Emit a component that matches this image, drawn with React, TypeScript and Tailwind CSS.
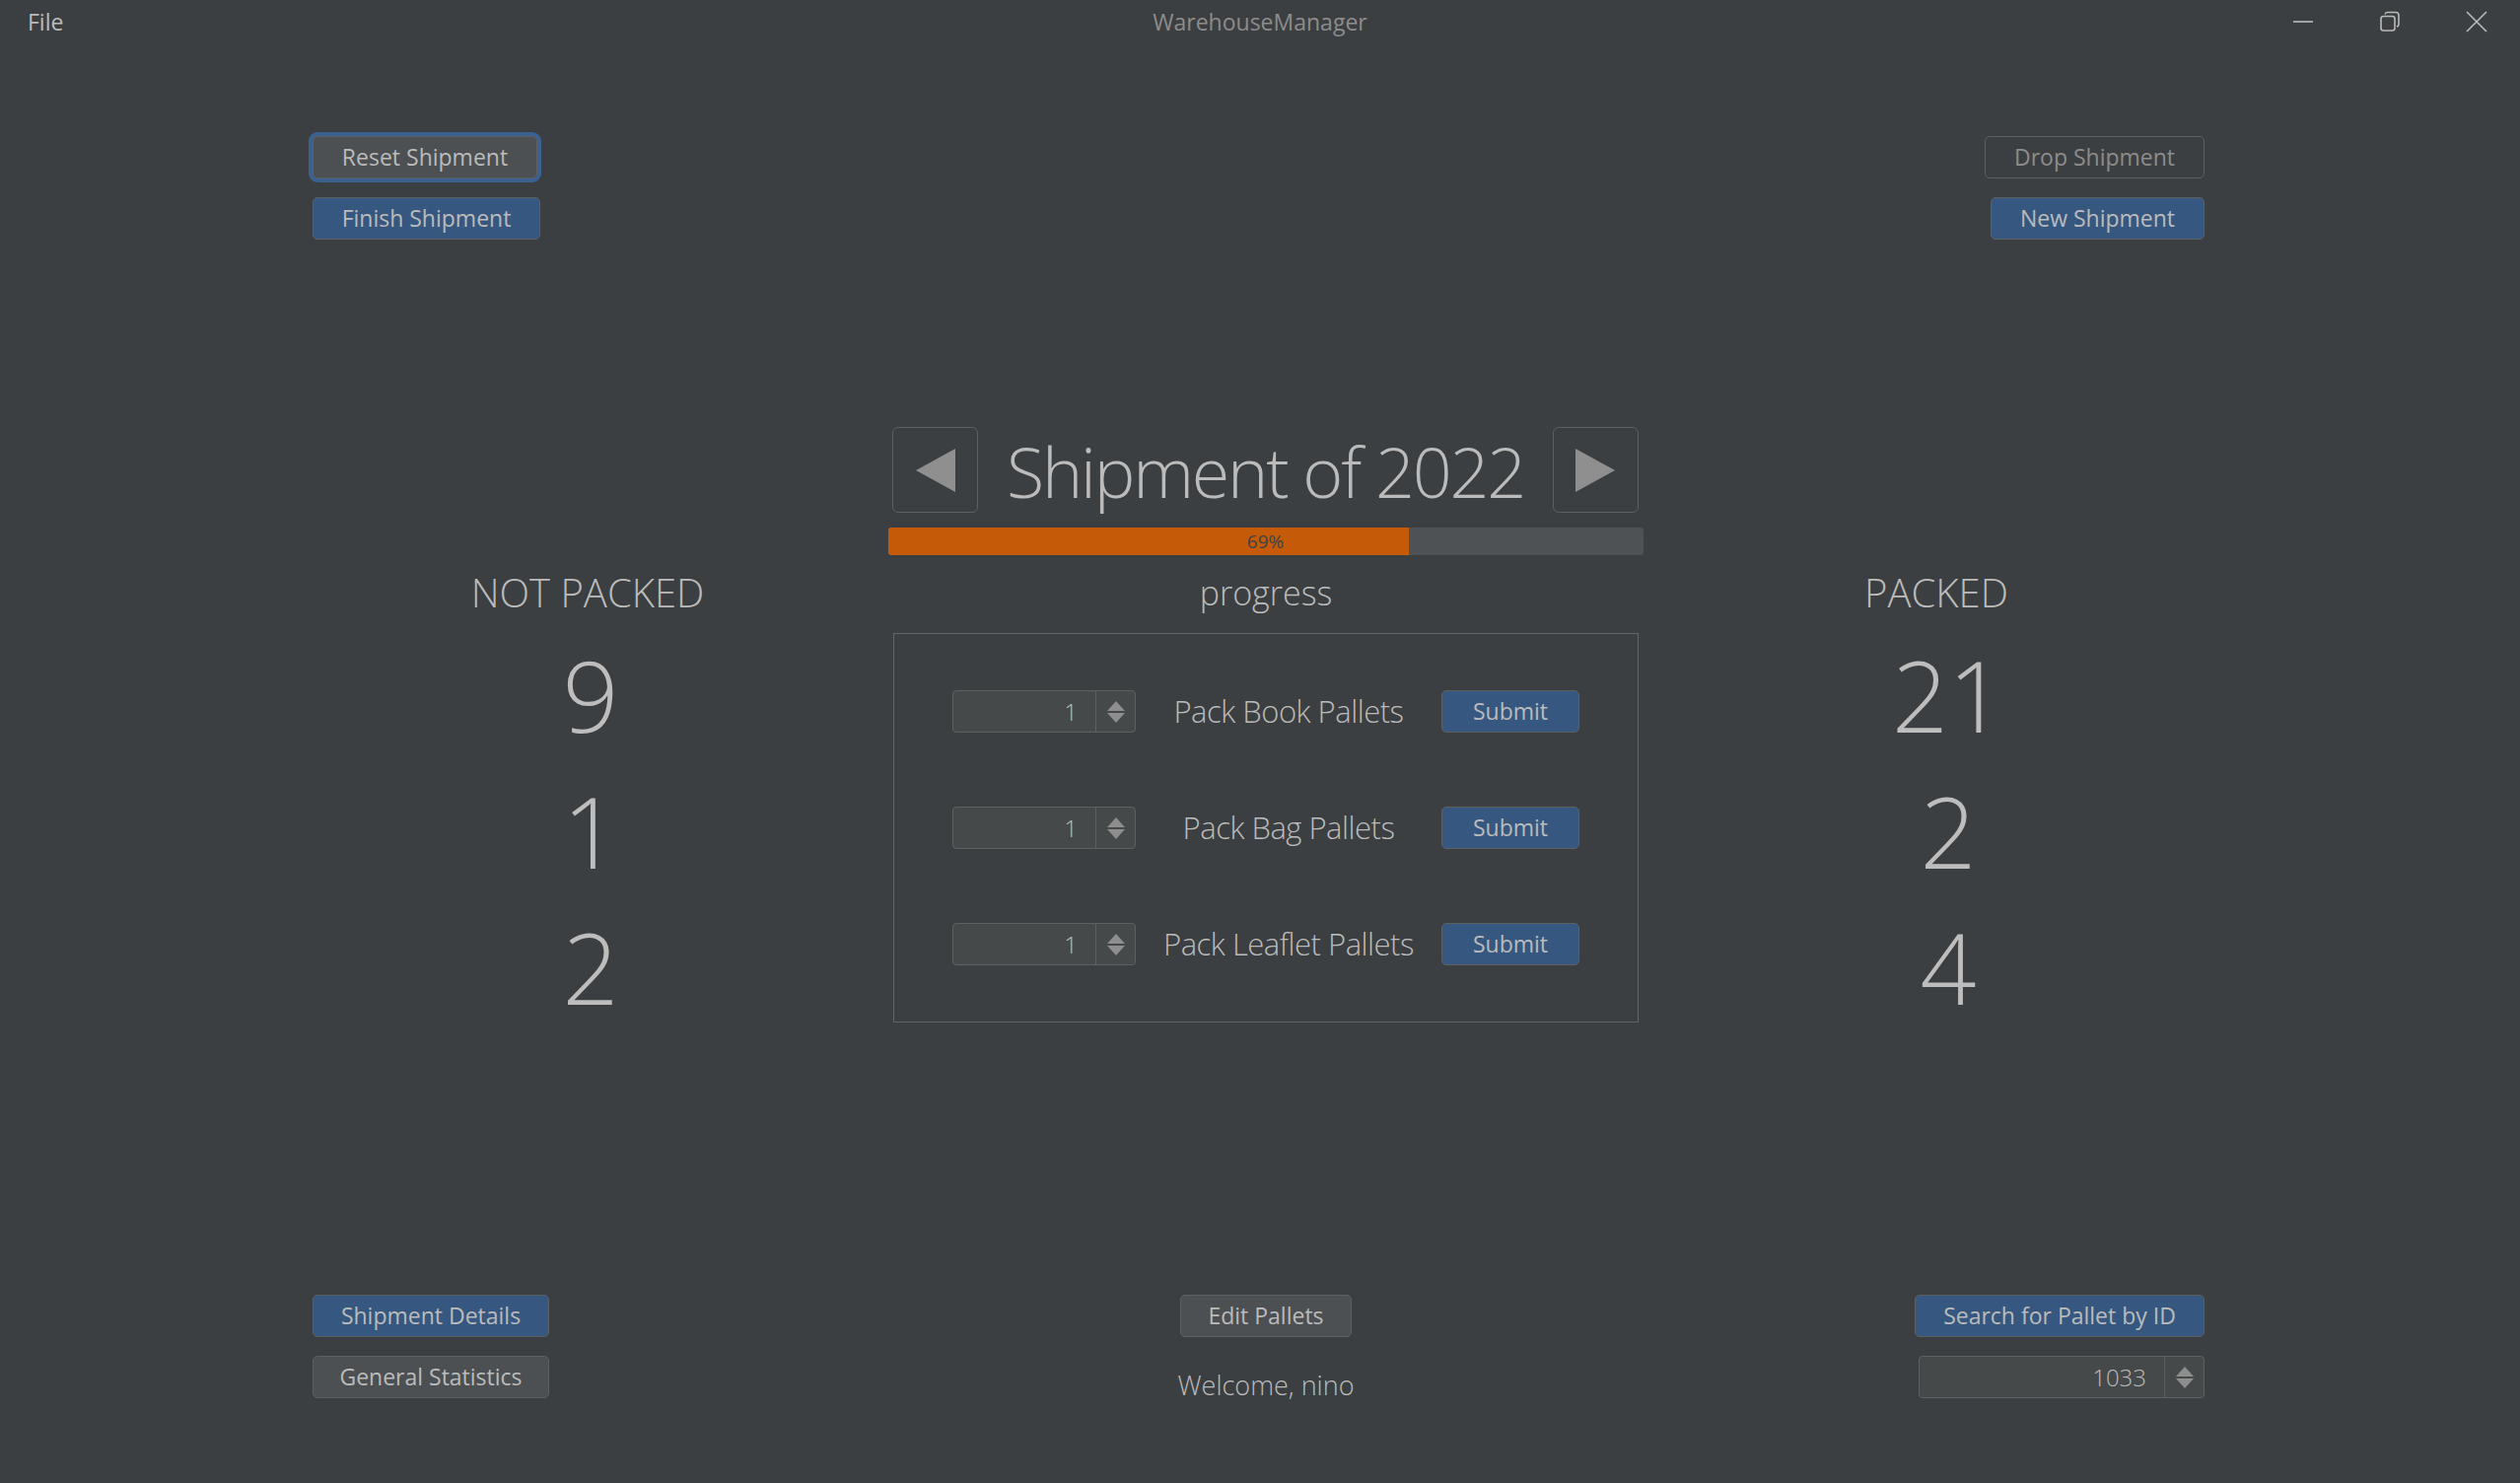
import React from "react";

const FONT = { fontFamily: '"Open Sans", "Noto Sans", "Liberation Sans", sans-serif' };

function Btn({
  children,
  variant = "gray",
  className = "",
}: {
  children: React.ReactNode;
  variant?: "gray" | "blue" | "ghost";
  className?: string;
}) {
  const v =
    variant === "blue"
      ? "bg-[#365880] text-[#bbbbbb]"
      : variant === "ghost"
      ? "bg-transparent text-[#8c8c8c]"
      : "bg-[#4c5052] text-[#bbbbbb]";
  return (
    <div
      className={`h-[43px] rounded-[5px] border border-[#5e6060] flex items-center justify-center text-[23px] leading-none ${v} ${className}`}
    >
      {children}
    </div>
  );
}

function Arrows() {
  return (
    <div className="w-[40px] h-full border-l border-[#5e6060] flex flex-col items-center justify-center gap-[2px]">
      <svg width="18" height="10" viewBox="0 0 18 10">
        <polygon points="9,0 18,10 0,10" fill="#8e8e8e" />
      </svg>
      <svg width="18" height="10" viewBox="0 0 18 10">
        <polygon points="0,0 18,0 9,10" fill="#8e8e8e" />
      </svg>
    </div>
  );
}

function Spinner({ value, className = "" }: { value: string; className?: string }) {
  return (
    <div
      className={`h-[43px] rounded-[4px] border border-[#5e6060] bg-[#45494a] flex items-stretch ${className}`}
    >
      <div className="flex-1 flex items-center justify-end pr-[18px] text-[24px] font-light text-[#bbbbbb]">
        {value}
      </div>
      <Arrows />
    </div>
  );
}

function PackRow({ label }: { label: string }) {
  return (
    <div className="flex items-center h-[43px]">
      <Spinner value="1" className="w-[186px]" />
      <div className="flex-1 text-center text-[31px] font-light text-[#bbbbbb] tracking-[-0.5px]">
        {label}
      </div>
      <Btn variant="blue" className="w-[140px]">
        Submit
      </Btn>
    </div>
  );
}

function Num({ children }: { children: React.ReactNode }) {
  return (
    <div className="h-[138px] text-[100px] leading-[138px] font-light text-[#bdbdbd] text-center">
      {children}
    </div>
  );
}

export default function App() {
  return (
    <div
      style={FONT}
      className="w-[2556px] h-[1504px] bg-[#3c3f41] flex flex-col overflow-hidden select-none"
    >
      {/* Title bar */}
      <div className="h-[44px] grid grid-cols-[1fr_auto_1fr] items-center">
        <div className="pl-[28px] text-[23px] text-[#bbbbbb] leading-none">File</div>
        <div className="text-[23px] text-[#8c8c8c] leading-none">WarehouseManager</div>
        <div className="flex justify-end h-full">
          <div className="w-[88px] h-full flex items-center justify-center">
            <svg width="22" height="22" viewBox="0 0 22 22">
              <line x1="1" y1="11" x2="21" y2="11" stroke="#bbbbbb" strokeWidth="1.6" />
            </svg>
          </div>
          <div className="w-[88px] h-full flex items-center justify-center">
            <svg width="22" height="22" viewBox="0 0 22 22">
              <rect x="2" y="5.5" width="14" height="14.5" rx="2.5" fill="none" stroke="#bbbbbb" strokeWidth="1.6" />
              <path d="M6 3.5 Q6.5 1.5 8.5 1.5 H17 Q20 1.5 20 4.5 V13.5 Q20 15.5 18 16" fill="none" stroke="#bbbbbb" strokeWidth="1.6" />
            </svg>
          </div>
          <div className="w-[88px] h-full flex items-center justify-center">
            <svg width="24" height="24" viewBox="0 0 24 24">
              <path d="M2 2 L22 22 M22 2 L2 22" stroke="#bbbbbb" strokeWidth="1.6" />
            </svg>
          </div>
        </div>
      </div>

      {/* Top buttons */}
      <div className="pl-[317px] pr-[320px] pt-[94px] flex justify-between">
        <div className="flex flex-col gap-[19px]">
          <Btn className="w-[228px] ring-[4px] ring-[#3b6190]">Reset Shipment</Btn>
          <Btn variant="blue" className="w-[231px]">
            Finish Shipment
          </Btn>
        </div>
        <div className="flex flex-col items-end gap-[19px]">
          <Btn variant="ghost" className="w-[223px]">
            Drop Shipment
          </Btn>
          <Btn variant="blue" className="w-[217px]">
            New Shipment
          </Btn>
        </div>
      </div>

      {/* Shipment navigation */}
      <div className="mt-[190px] flex flex-col items-center pl-[11px]">
        <div className="w-[757px] h-[87px] flex items-center justify-between">
          <div className="w-[87px] h-[87px] rounded-[6px] border border-[#5e6162] flex items-center justify-center">
            <svg width="40" height="44" viewBox="0 0 40 44">
              <polygon points="0,22 40,0 40,44" fill="#8f8f8f" />
            </svg>
          </div>
          <div className="text-[70px] font-light text-[#bbbbbb] tracking-[-2.2px] leading-none pt-[2px]">
            Shipment of 2022
          </div>
          <div className="w-[87px] h-[87px] rounded-[6px] border border-[#5e6162] flex items-center justify-center">
            <svg width="40" height="44" viewBox="0 0 40 44">
              <polygon points="40,22 0,0 0,44" fill="#8f8f8f" />
            </svg>
          </div>
        </div>
        <div className="mt-[15px] w-[766px] h-[28px] rounded-[3px] bg-[#4e5254] relative overflow-hidden flex">
          <div className="h-full bg-[#c55a08]" style={{ width: "69%" }} />
          <div className="absolute inset-0 flex items-center justify-center text-[19px] text-[#3f4244]">
            69%
          </div>
        </div>
      </div>

      {/* Middle section */}
      <div className="mt-[14px] pl-[317px] pr-[320px] grid grid-cols-[589px_756px_1fr]">
        <div className="pr-[31px] flex flex-col items-center">
          <div className="text-[40px] leading-[48px] font-light text-[#bbbbbb]">NOT PACKED</div>
          <div className="mt-[10px] pl-[6px] flex flex-col">
            <Num>9</Num>
            <Num>1</Num>
            <Num>2</Num>
          </div>
        </div>
        <div className="flex flex-col items-center">
          <div className="text-[34px] leading-[48px] font-light text-[#bbbbbb]">progress</div>
          <div className="mt-[17px] w-[756px] border border-[#636667] py-[57px] px-[59px] flex flex-col gap-[75px]">
            <PackRow label="Pack Book Pallets" />
            <PackRow label="Pack Bag Pallets" />
            <PackRow label="Pack Leaflet Pallets" />
          </div>
        </div>
        <div className="pl-[30px] flex flex-col items-center">
          <div className="text-[40px] leading-[48px] font-light text-[#bbbbbb]">PACKED</div>
          <div className="mt-[10px] pl-[24px] flex flex-col">
            <Num>21</Num>
            <Num>2</Num>
            <Num>4</Num>
          </div>
        </div>
      </div>

      {/* Bottom section */}
      <div className="mt-auto pb-[81px] pl-[317px] pr-[320px] grid grid-cols-[589px_756px_1fr]">
        <div className="flex flex-col gap-[19px]">
          <Btn variant="blue" className="w-[240px]">
            Shipment Details
          </Btn>
          <Btn className="w-[240px]">General Statistics</Btn>
        </div>
        <div className="flex flex-col items-center">
          <Btn className="w-[174px]">Edit Pallets</Btn>
          <div className="mt-[31px] text-[27px] leading-[36px] font-light text-[#bbbbbb]">Welcome, nino</div>
        </div>
        <div className="flex flex-col items-end gap-[19px]">
          <Btn variant="blue" className="w-[294px]">
            Search for Pallet by ID
          </Btn>
          <Spinner value="1033" className="w-[290px]" />
        </div>
      </div>
    </div>
  );
}
